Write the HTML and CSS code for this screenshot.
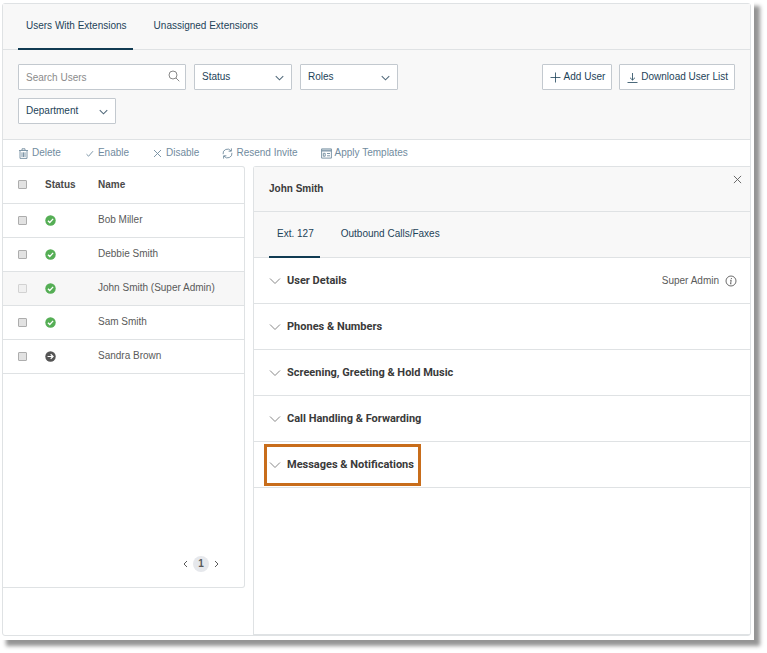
FILE: index.html
```html
<!DOCTYPE html>
<html lang="en">
<head>
<meta charset="utf-8">
<meta name="viewport" content="width=device-width, initial-scale=1">
<title>Users</title>
<link rel="stylesheet" href="styles.css">
</head>
<body>
<svg class="symbols" aria-hidden="true">
  <symbol id="chevron" viewBox="0 0 12 8"><path d="M1 1.5 6 6.5 11 1.5"/></symbol>
  <symbol id="cross" viewBox="0 0 10 10"><path d="M1 1 9 9M9 1 1 9"/></symbol>
  <symbol id="active" viewBox="0 0 12 12"><circle cx="6" cy="6" r="5.7" fill="#55ae55" stroke="none"/><path d="M3.2 6.2 5.2 8.2 8.9 4.2" stroke="#fff" stroke-width="1.4"/></symbol>
  <symbol id="invited" viewBox="0 0 12 12"><circle cx="6" cy="6" r="5.7" fill="#555" stroke="none"/><path d="M2.8 6H8.8M6.2 3.6 8.8 6 6.2 8.4" stroke="#fff" stroke-width="1.3"/></symbol>
</svg>
<div class="sheet">
  <main class="app">
    <nav class="tabs">
      <a class="tab selected" href="#with">Users With Extensions</a>
      <a class="tab" href="#unassigned">Unassigned Extensions</a>
    </nav>
    <div class="filters">
      <div class="fields">
        <label class="search"><input type="text" placeholder="Search Users" aria-label="Search Users">
          <svg viewBox="0 0 12 12"><circle cx="5" cy="5" r="4"/><path d="M8 8 11.3 11.3"/></svg></label>
        <label class="drop"><select aria-label="Status"><option>Status</option></select><svg><use href="#chevron"/></svg></label>
        <label class="drop"><select aria-label="Roles"><option>Roles</option></select><svg><use href="#chevron"/></svg></label>
        <label class="drop"><select aria-label="Department"><option>Department</option></select><svg><use href="#chevron"/></svg></label>
      </div>
      <div class="actions">
        <button class="boxed" type="button"><svg viewBox="0 0 11 11"><path d="M5.5 .5V10.5M.5 5.5H10.5"/></svg>Add User</button>
        <button class="boxed" type="button"><svg viewBox="0 0 11 11"><path d="M5.5 1V8M3 5.7 5.5 8.1 8 5.7M.5 10.5H10.5"/></svg>Download User List</button>
      </div>
    </div>
    <div class="toolbar">
      <button type="button"><svg viewBox="0 0 11 11"><path d="M1 2.5H10M4 2.3V.8H7V2.3M2 2.8V10.4H9V2.8M4 4.3V9M5.5 4.3V9M7 4.3V9"/></svg>Delete</button>
      <button type="button"><svg viewBox="0 0 11 11"><path d="M2.5 6.2 4.6 8.2 9 3.2"/></svg>Enable</button>
      <button type="button"><svg viewBox="0 0 11 11"><path d="M2 2 9 9M9 2 2 9"/></svg>Disable</button>
      <button type="button"><svg viewBox="0 0 11 11"><path d="M1.2 6.2V5A3.5 3.5 0 0 1 4.7 1.5H8.6M6.8 .2V3.2M1.2 5.2A4.3 4.3 0 0 1 9.2 3.2" stroke="none"/><path d="M1.1 6.2A4.4 4.4 0 0 1 9 2.9M9.4 .4V3.2H6.6M9.9 4.8A4.4 4.4 0 0 1 2 8.1M1.6 10.6V7.8H4.4"/></svg>Resend Invite</button>
      <button type="button"><svg viewBox="0 0 11 11"><path d="M.6 .9H10.4V10.1H.6ZM.6 2.2H10.4M.6 3H10.4M2.3 8.2V5.3H4.2V8.2ZM6 5.5H9M6 7.8H9"/></svg>Apply Templates</button>
    </div>
    <div class="content">
      <section class="users">
        <table>
          <thead><tr><th class="pick"><input type="checkbox" aria-label="Select all"></th><th class="state">Status</th><th>Name</th></tr></thead>
          <tbody>
            <tr><td class="pick"><input type="checkbox" aria-label="Select Bob Miller"></td><td><svg role="img" aria-label="Enabled"><use href="#active"/></svg></td><td>Bob Miller</td></tr>
            <tr><td class="pick"><input type="checkbox" aria-label="Select Debbie Smith"></td><td><svg role="img" aria-label="Enabled"><use href="#active"/></svg></td><td>Debbie Smith</td></tr>
            <tr class="current"><td class="pick"><input type="checkbox" disabled aria-label="Select John Smith"></td><td><svg role="img" aria-label="Enabled"><use href="#active"/></svg></td><td>John Smith (Super Admin)</td></tr>
            <tr><td class="pick"><input type="checkbox" aria-label="Select Sam Smith"></td><td><svg role="img" aria-label="Enabled"><use href="#active"/></svg></td><td>Sam Smith</td></tr>
            <tr><td class="pick"><input type="checkbox" aria-label="Select Sandra Brown"></td><td><svg role="img" aria-label="Invited"><use href="#invited"/></svg></td><td>Sandra Brown</td></tr>
          </tbody>
        </table>
        <nav class="pager">
          <button type="button" aria-label="Previous page"><svg viewBox="0 0 5 8"><path d="M4 1 1 4 4 7"/></svg></button>
          <a href="#page-1">1</a>
          <button type="button" aria-label="Next page"><svg viewBox="0 0 5 8"><path d="M1 1 4 4 1 7"/></svg></button>
        </nav>
      </section>
      <section class="details">
        <header class="person">
          <h1>John Smith</h1>
          <button type="button" aria-label="Close"><svg><use href="#cross"/></svg></button>
        </header>
        <nav class="tabs">
          <a class="tab selected" href="#extension">Ext. 127</a>
          <a class="tab" href="#outbound">Outbound Calls/Faxes</a>
        </nav>
        <div class="group"><button type="button"><svg><use href="#chevron"/></svg>User Details</button>
          <span class="role">Super Admin <svg viewBox="0 0 12 12"><circle cx="6" cy="6" r="5"/><path d="M6.4 3V4.1M6.2 5.2 5.6 8.8M5.2 5.3H6.2M5.2 8.8H6.4"/></svg></span></div>
        <div class="group"><button type="button"><svg><use href="#chevron"/></svg>Phones &amp; Numbers</button></div>
        <div class="group"><button type="button"><svg><use href="#chevron"/></svg>Screening, Greeting &amp; Hold Music</button></div>
        <div class="group"><button type="button"><svg><use href="#chevron"/></svg>Call Handling &amp; Forwarding</button></div>
        <div class="group"><button class="marked" type="button"><svg><use href="#chevron"/></svg>Messages &amp; Notifications</button></div>
      </section>
    </div>
  </main>
</div>
</body>
</html>
```
FILE: styles.css
```css
:root {
  --navy: #1d4359;
  --line: #dfe2e4;
  --field: #c3c9cf;
  --soft: #f8f8f8;
}

* { box-sizing: border-box; }

body {
  margin: 0;
  min-height: 100vh;
  display: flex;
  padding: 0 13px 13px 0;
  background: #fff;
  color: #5a5a5a;
  font: 10px/14px "Liberation Sans", Arial, sans-serif;
}

button, input, select { font: inherit; color: inherit; margin: 0; }
button { border: 0; padding: 0; background: none; display: flex; align-items: center; }
a { color: inherit; text-decoration: none; }
svg { fill: none; stroke: currentColor; flex: none; display: block; }
.symbols { position: absolute; width: 0; height: 0; }

.sheet {
  flex: 1;
  display: flex;
  padding: 3px 3px 4px 2px;
  background: #fff;
  box-shadow: 6px 6px 4px rgba(0, 0, 0, .42);
}

.app {
  flex: 1;
  display: flex;
  flex-direction: column;
  border: 1px solid var(--line);
  border-radius: 3px;
}

.tabs {
  display: flex;
  gap: 13px;
  height: 46px;
  padding: 0 15px;
  background: var(--soft);
  border-bottom: 1px solid var(--line);
  color: var(--navy);
}
.tab { display: flex; align-items: center; height: 46px; padding: 0 6px 0 8px; border-bottom: 2px solid transparent; }
.tab.selected { border-color: #113b52; }

.filters {
  display: flex;
  justify-content: space-between;
  align-items: flex-start;
  padding: 14px 15px 15px;
  background: var(--soft);
  border-bottom: 1px solid var(--line);
  color: var(--navy);
}
.fields { display: flex; flex-wrap: wrap; gap: 8px; max-width: 400px; }
.search, .drop { position: relative; display: block; height: 26px; }
.search { width: 168px; }
.drop { width: 98px; }
.search input, .drop select {
  width: 100%;
  height: 100%;
  padding: 0 7px;
  border: 1px solid var(--field);
  border-radius: 1px;
  background: #fff;
  appearance: none;
}
.search input::placeholder { color: #8b8b8b; }
.search svg { position: absolute; right: 6px; top: 6px; width: 12px; height: 12px; color: #888; }
.drop svg { position: absolute; right: 8px; top: 11px; width: 9px; height: 6px; color: #51697a; stroke-width: 1.4; }

.actions { display: flex; gap: 7px; }
.boxed { gap: 3px; height: 26px; padding: 0 6px 0 7px; background: #fff; border: 1px solid var(--field); border-radius: 1px; }
.boxed svg { width: 11px; height: 11px; stroke-width: .8; }

.toolbar { display: flex; gap: 23px; height: 26px; padding: 0 15px; color: #718b9e; }
.toolbar button { gap: 3px; }
.toolbar svg { width: 11px; height: 11px; stroke-width: .9; }

.content { flex: 1; display: flex; gap: 8px; }

.users {
  flex: 0 1 242px;
  display: flex;
  flex-direction: column;
  justify-content: space-between;
  margin: 0 0 47px;
  border: 1px solid var(--line);
  border-left: 0;
  border-radius: 0 3px 3px 0;
}
table { width: 100%; border-collapse: collapse; table-layout: fixed; }
th, td { height: 34px; padding: 0; border-bottom: 1px solid var(--line); text-align: left; }
th { height: 36px; color: #4a4a4a; }
.pick { width: 42px; padding-left: 15px; }
.state { width: 53px; }
td svg { width: 11px; height: 11px; }
.current { background: #f7f7f7; }
input[type="checkbox"] {
  appearance: none;
  display: block;
  width: 9px;
  height: 9px;
  border: 1px solid #adadad;
  border-radius: 1px;
  background: #e2e2e2;
}
input[type="checkbox"]:disabled { border-color: #d2d2d2; background: #f0f0f0; }

.pager { display: flex; justify-content: flex-end; align-items: center; gap: 5px; padding: 0 25px 15px; }
.pager a { width: 16px; height: 16px; border-radius: 50%; background: #e6e8ec; text-align: center; line-height: 16px; font-weight: bold; }
.pager svg { width: 5px; height: 8px; }

.details { flex: 1; border: 1px solid var(--line); border-right: 0; border-radius: 3px 0 0 0; }
.person {
  display: flex;
  justify-content: space-between;
  align-items: center;
  height: 45px;
  padding: 0 8px 0 15px;
  background: var(--soft);
  border-bottom: 1px solid var(--line);
}
h1 { margin: 0; font-size: 10px; line-height: 14px; color: #3a3a3a; }
.person button { align-self: flex-start; margin-top: 8px; }
.person svg { width: 9px; height: 9px; }

.group {
  display: flex;
  justify-content: space-between;
  align-items: center;
  height: 46px;
  padding: 1px 13px 0;
  border-bottom: 1px solid var(--line);
}
.group button { gap: 6px; height: 36px; padding: 0 4px 0 2px; color: #3a3a3a; font: bold 11px/14px Roboto, Arial, sans-serif; }
.group button svg { width: 12px; height: 8px; stroke: #888; }
.group .marked { outline: 3px solid #c86d1b; }
.role { display: flex; align-items: center; gap: 6px; }
.role svg { width: 12px; height: 12px; stroke-width: .9; }
```
